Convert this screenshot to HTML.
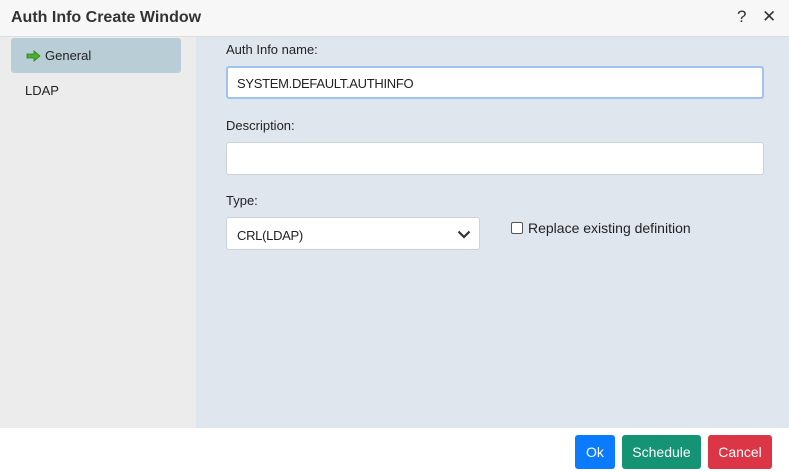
<!DOCTYPE html>
<html><head><meta charset="utf-8"><style>
*{box-sizing:border-box;margin:0;padding:0}
body{width:789px;height:472px;overflow:hidden;background:#fff;font-family:"Liberation Sans",sans-serif;font-size:13px;color:#222;position:relative}
.title{position:absolute;left:0;top:0;width:789px;height:37px;background:#f7f7f7;border-bottom:1px solid #ddd}
.title h1{position:absolute;left:11px;top:9px;font-size:16px;font-weight:bold;color:#333}
.title .ic{position:absolute;top:7px;font-size:17px;color:#333}
.side{position:absolute;left:0;top:37px;width:196px;height:391px;background:#ececec}
.sel{position:absolute;left:11px;top:1px;width:170px;height:35px;background:#b8cdd6;border-radius:3px}
.main{position:absolute;left:196px;top:37px;width:593px;height:391px;background:#e0e6ee}
.lbl{position:absolute;font-size:13px;color:#222}
.inp{position:absolute;left:226px;width:538px;height:33px;background:#fff;border:1px solid #ccd2da;border-radius:3px;padding:9px 10px;font-size:13px;letter-spacing:-0.3px}
.btn{position:absolute;top:435px;height:34px;border-radius:3px;color:#fff;font-size:14px;text-align:center;line-height:34px}
</style></head><body>
<div class="title"><h1>Auth Info Create Window</h1><span class="ic" style="left:737px">?</span><span class="ic" style="left:762px">✕</span></div>
<div class="side">
<div class="sel"></div>
<svg style="position:absolute;left:26px;top:13px" width="15" height="12" viewBox="0 0 15 12"><path d="M1 4h7V1l6 5-6 5V8H1z" fill="#4caf2a" stroke="#2e7d16" stroke-width="0.8"/></svg>
<span class="lbl" style="left:45px;top:11px">General</span>
<span class="lbl" style="left:25px;top:46px">LDAP</span>
</div>
<div class="main"></div>
<span class="lbl" style="left:226px;top:42px">Auth Info name:</span>
<div class="inp" style="top:66px;border:2px solid #9ec3ef;padding:8px 9px">SYSTEM.DEFAULT.AUTHINFO</div>
<span class="lbl" style="left:226px;top:118px">Description:</span>
<div class="inp" style="top:142px"></div>
<span class="lbl" style="left:226px;top:193px">Type:</span>
<div class="inp" style="top:217px;width:254px;padding-top:10px">CRL(LDAP)
<svg style="position:absolute;right:8px;top:12px" width="14" height="9" viewBox="0 0 14 9"><path d="M1.5 1.5l5.5 5.5 5.5-5.5" fill="none" stroke="#333" stroke-width="2.2"/></svg></div>
<div style="position:absolute;left:511px;top:222px;width:12px;height:12px;border:1px solid #555;border-radius:2px;background:#fff"></div>
<span class="lbl" style="left:528px;top:220px;font-size:14px">Replace existing definition</span>
<div class="btn" style="left:575px;width:40px;background:#0a7bff">Ok</div>
<div class="btn" style="left:622px;width:79px;background:#149474">Schedule</div>
<div class="btn" style="left:708px;width:64px;background:#dc3545">Cancel</div>
</body></html>
